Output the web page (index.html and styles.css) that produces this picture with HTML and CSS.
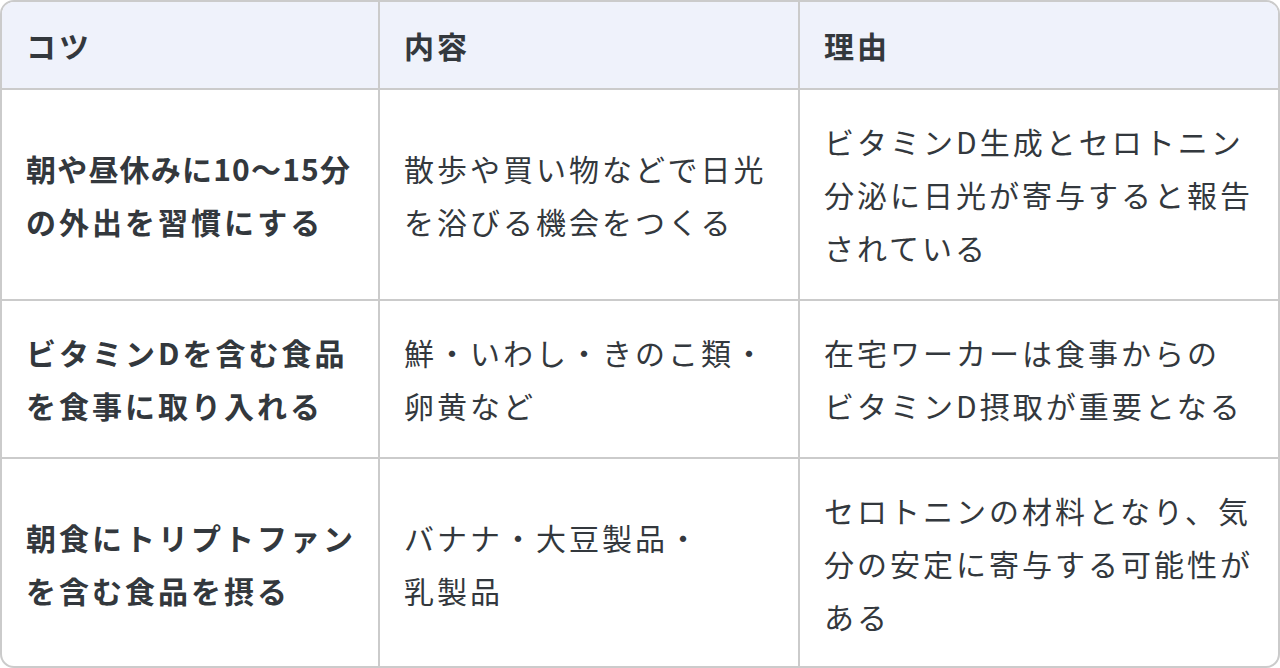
FILE: index.html
```html
<!DOCTYPE html>
<html lang="ja">
<head>
<meta charset="utf-8">
<title>コツ</title>
<link rel="stylesheet" href="styles.css">
</head>
<body>
<div class="table-wrap">
  <table class="tips">
    <colgroup>
      <col class="c1"><col class="c2"><col class="c3">
    </colgroup>
    <thead>
      <tr>
        <th>コツ</th>
        <th>内容</th>
        <th>理由</th>
      </tr>
    </thead>
    <tbody>
      <tr>
        <th class="tip"><span class="tight">朝や昼休みに10〜15分</span>の外出を習慣にする</th>
        <td>散歩や買い物などで日光を浴びる機会をつくる</td>
        <td>ビタミンD生成とセロトニン分泌に日光が寄与すると報告されている</td>
      </tr>
      <tr>
        <th class="tip">ビタミンDを含む食品を食事に取り入れる</th>
        <td>鮮・いわし・きのこ類・卵黄など</td>
        <td>在宅ワーカーは食事からの<span class="nobr">ビタミンD</span>摂取が重要となる</td>
      </tr>
      <tr>
        <th class="tip">朝食にトリプトファンを含む食品を摂る</th>
        <td>バナナ・大豆製品・<br>乳製品</td>
        <td>セロトニンの材料となり、気分の安定に寄与する可能性がある</td>
      </tr>
    </tbody>
  </table>
</div>
</body>
</html>
```

FILE: styles.css
```css
html, body {
  margin: 0;
  padding: 0;
  background: #ffffff;
}

body {
  font-family: "Noto Sans CJK JP", "Noto Sans", sans-serif;
  color: #33383d;
}

.table-wrap {
  box-sizing: border-box;
  width: 1280px;
  height: 668px;
  border: 2px solid #cbcbcb;
  border-radius: 14px;
  overflow: hidden;
}

.tips {
  width: 100%;
  height: 100%;
  border-collapse: collapse;
  table-layout: fixed;
}

.c1 { width: 377px; }
.c2 { width: 420px; }
.c3 { width: auto; }

.tips th,
.tips td {
  font-size: 30px;
  line-height: 53px;
  letter-spacing: 0.1em;
  text-align: left;
  vertical-align: middle;
  padding: 25px 18px 25px 24px;
  border-right: 2px solid #cbcbcb;
  border-bottom: 2px solid #cbcbcb;
}

.tips tr > :last-child {
  border-right: none;
}

.tips tbody tr:last-child > * {
  border-bottom: none;
}

.tips thead th {
  background: #eff2fb;
  font-weight: 700;
  height: 87px;
  padding-top: 0;
  padding-bottom: 0;
  box-sizing: border-box;
}

.tips td {
  font-weight: 400;
}

.tips th.tip {
  font-weight: 700;
}

.tight {
  letter-spacing: 0.04em;
}

.nobr {
  white-space: nowrap;
}
```
